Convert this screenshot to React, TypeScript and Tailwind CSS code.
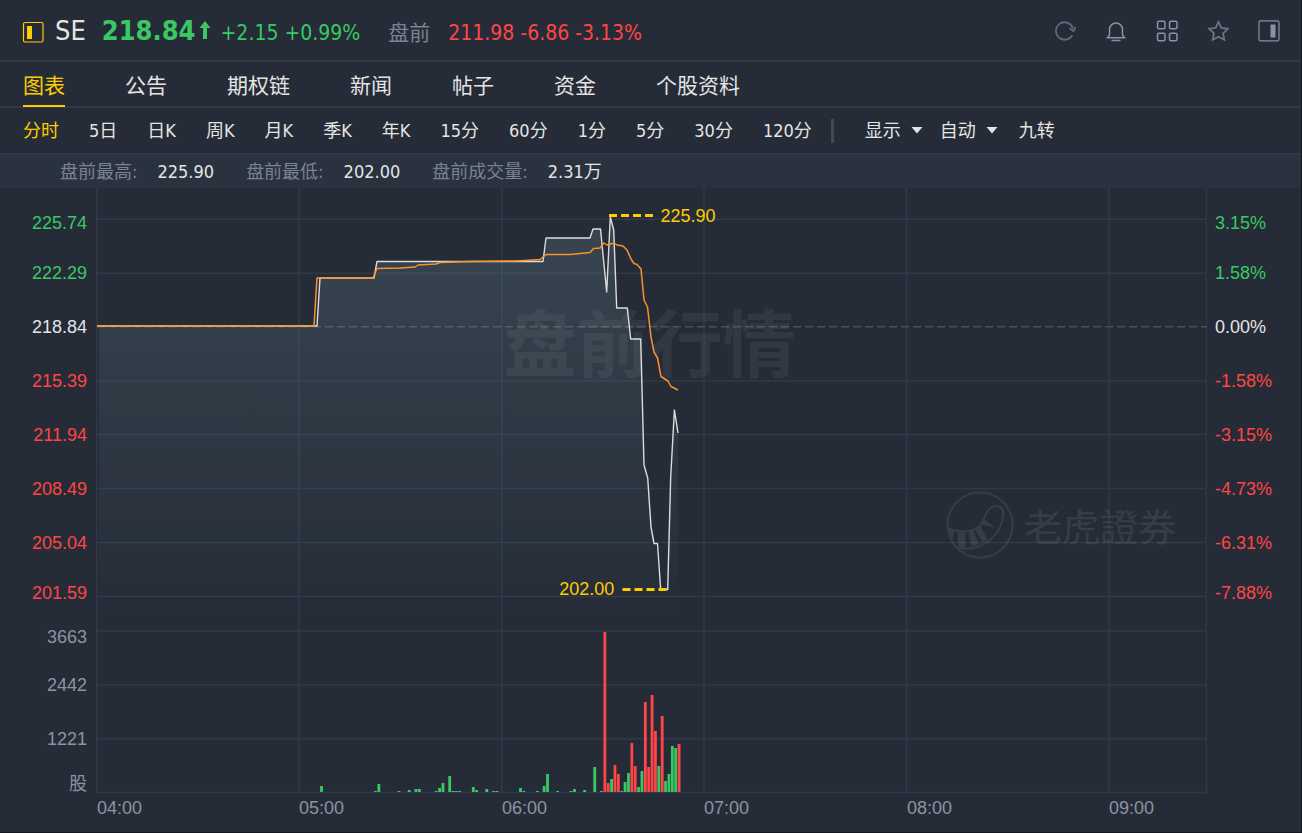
import { useState } from 'react';
import type { ReactNode } from 'react';
import clsx from 'clsx';

const TABS = ['图表', '公告', '期权链', '新闻', '帖子', '资金', '个股资料'];

const PERIODS = [
    '分时',
    '5日',
    '日K',
    '周K',
    '月K',
    '季K',
    '年K',
    '15分',
    '60分',
    '1分',
    '5分',
    '30分',
    '120分',
];

const STATS = [
    { label: '盘前最高:', value: '225.90' },
    { label: '盘前最低:', value: '202.00' },
    { label: '盘前成交量:', value: '2.31万' },
];

const AXIS = [
    { price: '225.74', percent: '3.15%', row: 'h-[46px] text-[#3ac864]' },
    { price: '222.29', percent: '1.58%', row: 'h-[54px] text-[#3ac864]' },
    { price: '218.84', percent: '0.00%', row: 'h-[54px] text-[#e4e4e4]' },
    { price: '215.39', percent: '-1.58%', row: 'h-[54px] text-[#ff4545]' },
    { price: '211.94', percent: '-3.15%', row: 'h-[54px] text-[#ff4545]' },
    { price: '208.49', percent: '-4.73%', row: 'h-[54px] text-[#ff4545]' },
    { price: '205.04', percent: '-6.31%', row: 'h-[54px] text-[#ff4545]' },
    { price: '201.59', percent: '-7.88%', row: 'h-[46px] text-[#ff4545]' },
];

const VOLUME_AXIS = [
    { label: '3663', row: 'h-[42px]' },
    { label: '2442', row: 'h-[54px]' },
    { label: '1221', row: 'h-[54px]' },
    { label: '股', row: 'h-[36px]' },
];

const HOURS = ['04:00', '05:00', '06:00', '07:00', '08:00', '09:00'];

// Plot space is 1111 x 606, one minute is 3.373 units wide
const PLOT_BOTTOM = 604;
const MINUTE = 3.373;

const PRICE_LINE =
    '1,138 221,138 224,90 278,90 281,73.5 447,73.5 450,50 494,50 497,41 504.5,41 510.7,104 514.3,29 517.7,42 520.7,120 531.3,120 534.7,151 544.7,151 548,277 551.7,290 555,339 558,355.5 561.5,355.5 564.7,401.5 571.7,401.5 574.7,289 578.4,222 582,245';

const AVERAGE_LINE =
    '1,138 218,138 221,90 277,90 281,80.5 304,80 319,79 322,77 340,76 344,74.5 374,73.5 420,73 444,71.5 450,66.5 474,66.5 494,64.5 497.5,60.5 504,60 508,55 511,57 518,55 521,57 527,58 531,62 535,71 538,75.5 541,76.5 545,81 548,112 551.5,119 555,149 558,164 561.5,170 565,188.5 572,193 575,198.5 582,202';

// [minute, height, falling]
const VOLUMES: [number, number, boolean?][] = [
    [66, 6],
    [82, 1],
    [83, 8],
    [89, 1],
    [92, 2],
    [94, 3],
    [95, 3],
    [100, 1],
    [101, 4],
    [102, 9],
    [104, 16],
    [105, 1],
    [106, 1],
    [107, 1],
    [111, 5],
    [112, 2],
    [115, 3],
    [117, 1],
    [118, 1],
    [125, 4],
    [126, 1],
    [130, 1],
    [132, 6],
    [133, 18],
    [136, 1],
    [140, 1],
    [141, 3],
    [144, 2],
    [147, 25],
    [149, 1],
    [150, 160, true],
    [151, 9, true],
    [152, 13],
    [153, 27, true],
    [154, 18, true],
    [155, 1],
    [156, 10],
    [157, 19],
    [158, 49, true],
    [159, 26, true],
    [160, 5],
    [161, 21],
    [162, 90, true],
    [163, 25, true],
    [164, 97, true],
    [165, 61, true],
    [166, 26],
    [167, 76, true],
    [168, 11],
    [169, 18],
    [170, 46],
    [171, 44],
    [172, 48, true],
];

const IconButton = ({
    label,
    className,
    children,
}: {
    label: string;
    className?: string;
    children: ReactNode;
}) => (
    <button
        type="button"
        aria-label={label}
        className={clsx('hover:text-gray-200', className)}
    >
        <svg
            width="22"
            height="22"
            viewBox="0 0 22 22"
            fill="none"
            stroke="currentColor"
            strokeWidth="1.5"
        >
            {children}
        </svg>
    </button>
);

const Header = () => (
    <header className="flex h-[62px] items-center border-b-2 border-[#2e3a49] pl-[22px] pr-[21px]">
        <svg width="22" height="22" viewBox="0 0 22 22" className="mt-1">
            <rect
                x="1.5"
                y="1.5"
                width="19.5"
                height="19.5"
                rx="1.5"
                fill="none"
                stroke="#fc0"
                strokeWidth="1.2"
            />
            <rect x="5" y="5" width="5" height="13" fill="#fc0" />
        </svg>
        <h1 className="ml-[11px] text-[27px] leading-none text-[#e4e4e4]">SE</h1>
        <div className="ml-4 flex items-center text-[#3ac864]">
            <span className="text-[27px] leading-none font-bold">218.84</span>
            <svg width="12" height="20" viewBox="0 0 12 20" className="ml-[3px]">
                <path d="M6 1 11.5 8H8v11H4V8H.5Z" fill="currentColor" />
            </svg>
            <span className="mt-1.5 ml-[10px] text-[21px] leading-none">
                +2.15 +0.99%
            </span>
        </div>
        <span className="mt-1.5 ml-7 text-[21px] leading-none text-[#7a8294]">
            盘前
        </span>
        <span className="mt-1.5 ml-[18px] text-[21px] leading-none text-[#ff4545]">
            211.98 -6.86 -3.13%
        </span>
        <div className="ml-auto flex items-center gap-[29px] pt-0.5 text-[#8992a5]">
            <IconButton label="刷新" className="text-[#5f6979]">
                <path
                    d="M18.3 15.2A8.7 8.7 0 1 1 19 8.5M15.5 8.2l4 3 2.2-4.2"
                    strokeWidth="1.8"
                />
            </IconButton>
            <IconButton label="提醒">
                <path d="M4.5 15V9.5a6.5 6.5 0 0 1 13 0V15l2 2.7h-17Z" />
                <path d="M6.5 20.5h9" />
            </IconButton>
            <IconButton label="分组">
                <rect x="1.5" y="1.2" width="7.5" height="7.5" rx="1.5" />
                <rect x="13.5" y="1.2" width="7.5" height="7.5" rx="1.5" />
                <rect x="1.5" y="13.2" width="7.5" height="7.5" rx="1.5" />
                <rect x="13.5" y="13.2" width="7.5" height="7.5" rx="1.5" />
            </IconButton>
            <IconButton label="自选" className="text-[#6a7485]">
                <path
                    d="m11.5 1.8 2.8 6 6.6.9-4.8 4.6 1.2 6.6-5.8-3.2-5.8 3.2 1.2-6.6L2.1 8.7l6.6-.9Z"
                    strokeWidth="1.8"
                />
            </IconButton>
            <IconButton label="侧栏">
                <rect x="1" y=".8" width="20" height="20" rx="1.5" strokeWidth="1.2" />
                <rect x="12.5" y="4.5" width="5" height="13" fill="currentColor" stroke="none" />
            </IconButton>
        </div>
    </header>
);

const Dropdown = ({ label, options }: { label: string; options: string[] }) => (
    <div className="relative flex items-center">
        <select
            aria-label={label}
            className="w-[58px] cursor-pointer appearance-none bg-transparent outline-none"
        >
            {options.map((option) => (
                <option key={option} className="bg-[#252c37]">
                    {option}
                </option>
            ))}
        </select>
        <svg
            width="12"
            height="7"
            viewBox="0 0 12 7"
            className="pointer-events-none absolute right-0"
        >
            <path d="M.5 0h11L6 6.5Z" fill="currentColor" />
        </svg>
    </div>
);

const ValueAxis = ({ side }: { side: 'left' | 'right' }) => (
    <div
        className={clsx(
            'flex shrink-0 flex-col pt-3',
            side === 'left' ? 'w-24 items-end pr-[9px]' : 'w-[94px] pl-2'
        )}
    >
        {AXIS.map((tick) => (
            <div key={tick.price} className={clsx('flex items-center', tick.row)}>
                {side === 'left' ? tick.price : tick.percent}
            </div>
        ))}
        {side === 'left' &&
            VOLUME_AXIS.map((tick) => (
                <div
                    key={tick.label}
                    className={clsx('flex items-center text-[#8d93a1]', tick.row)}
                >
                    {tick.label}
                </div>
            ))}
    </div>
);

const Plot = () => (
    <div className="relative h-[606px]">
        <svg
            viewBox="0 0 1111 606"
            preserveAspectRatio="none"
            className="block h-full w-full"
        >
            <defs>
                <linearGradient
                    id="area"
                    gradientUnits="userSpaceOnUse"
                    x1="0"
                    y1="29"
                    x2="0"
                    y2="430"
                >
                    <stop offset="0" stopColor="#8fb8c8" stopOpacity=".18" />
                    <stop offset="1" stopColor="#8fb8c8" stopOpacity="0" />
                </linearGradient>
            </defs>
            <g stroke="#2e3a49" strokeWidth="1.5">
                {[31.3, 85.3, 193, 246.5, 300.5, 354.5, 408.5, 443, 497, 550.7, 604.5].map(
                    (y) => (
                        <line key={y} x1="1" x2="1111" y1={y} y2={y} />
                    )
                )}
                {[0.7, 203, 405.7, 608, 810.5, 1013, 1110.5].map((x) => (
                    <line key={x} x1={x} x2={x} y1="0" y2="604.5" />
                ))}
            </g>
            <line
                x1="1"
                x2="1111"
                y1="138.7"
                y2="138.7"
                stroke="#4b4d5b"
                strokeWidth="1.5"
                strokeDasharray="8 4"
            />
            <polygon points={`3,430 3,138 ${PRICE_LINE} 582,430`} fill="url(#area)" />
            <polyline
                points={PRICE_LINE}
                fill="none"
                stroke="#dcdcdc"
                strokeWidth="1.4"
                strokeLinejoin="round"
            />
            <polyline
                points={AVERAGE_LINE}
                fill="none"
                stroke="#f9922c"
                strokeWidth="1.5"
                strokeLinejoin="round"
            />
            <g stroke="#fc0" strokeWidth="3" strokeDasharray="8 4">
                <line x1="513" x2="557" y1="27.5" y2="27.5" />
                <line x1="526.5" x2="570.5" y1="401.5" y2="401.5" />
            </g>
            {VOLUMES.map(([minute, height, falling]) => (
                <rect
                    key={minute}
                    x={minute * MINUTE + 1.5}
                    y={PLOT_BOTTOM - height}
                    width="2.8"
                    height={height}
                    fill={falling ? '#ff4545' : '#3ac864'}
                />
            ))}
        </svg>

        {/* price callouts */}
        <span className="absolute top-[18px] left-[50.8%] leading-5 text-[#fc0]">
            225.90
        </span>
        <span className="absolute top-[391px] left-[41.7%] leading-5 text-[#fc0]">
            202.00
        </span>

        {/* watermarks */}
        <div className="pointer-events-none absolute top-[115px] left-[36.7%] font-[Noto_Sans_CJK_SC,sans-serif] text-[73px] leading-[73px] font-bold text-white/6">
            盘前行情
        </div>
        <div className="pointer-events-none absolute top-[303px] left-[76.5%] flex items-center gap-[10px] text-white opacity-8">
            <svg
                width="68"
                height="68"
                viewBox="0 0 68 68"
                fill="none"
                stroke="currentColor"
                strokeWidth="2"
            >
                <circle cx="34" cy="34" r="32.5" />
                <path d="M1.5 36C6 39 10 40 15 40 25 41 33 37 37 30 40 25 41 15 50 15c6 0 8 5 7 10-2 15-12 27-26 31-6 2-12 2-18 1" />
                <path
                    d="m1.5 36 6 3-1 9ZM12 41h7v15l-6 1ZM23 40l4-1 5 14-6 2ZM29 38l4-4 8 14-4 3ZM37 28l11 8-12-3Z"
                    fill="currentColor"
                    strokeWidth="1"
                />
            </svg>
            <span className="font-[Noto_Sans_CJK_TC,sans-serif] text-[38px] leading-none">
                老虎證券
            </span>
        </div>
    </div>
);

export default function App() {
    const [tab, setTab] = useState('图表');
    const [period, setPeriod] = useState('分时');

    return (
        <div className="min-h-screen border-r border-b border-[#12161d] bg-[#252c37] font-[DejaVu_Sans_Condensed,Noto_Sans,Noto_Sans_CJK_SC,sans-serif] text-lg text-[#e4e4e4]">
            <Header />

            <nav className="flex h-[46px] gap-[60px] border-b-2 border-[#2e3a49] pl-[23px] text-[21px]">
                {TABS.map((name) => (
                    <button
                        key={name}
                        type="button"
                        onClick={() => setTab(name)}
                        className={clsx(
                            '-mb-px border-b-2 pt-1.5 leading-none whitespace-nowrap',
                            tab === name
                                ? 'border-[#fc0] text-[#fc0]'
                                : 'border-transparent'
                        )}
                    >
                        {name}
                    </button>
                ))}
            </nav>

            <div className="flex h-[47px] items-center border-b-2 border-[#2e3a49] pl-[23px]">
                <div className="flex gap-[30px]">
                    {PERIODS.map((name) => (
                        <button
                            key={name}
                            type="button"
                            onClick={() => setPeriod(name)}
                            className={clsx(
                                'whitespace-nowrap',
                                period === name && 'text-[#fc0]'
                            )}
                        >
                            {name}
                        </button>
                    ))}
                </div>
                <div className="mr-[31px] ml-[19px] h-6 w-[3px] bg-[#434954]" />
                <div className="flex items-center gap-[17px]">
                    <Dropdown label="显示" options={['显示', '均价线', '成交量']} />
                    <Dropdown label="坐标" options={['自动', '普通', '对数']} />
                </div>
                <button type="button" className="ml-[21px] whitespace-nowrap">
                    九转
                </button>
            </div>

            <dl className="flex h-[33px] items-center gap-8 bg-[#29323e] pl-[60px]">
                {STATS.map((stat) => (
                    <div key={stat.label} className="flex gap-5">
                        <dt className="text-[#7a8294]">{stat.label}</dt>
                        <dd>{stat.value}</dd>
                    </div>
                ))}
            </dl>

            <main className="flex font-[Liberation_Sans,Noto_Sans_CJK_SC,sans-serif]">
                <ValueAxis side="left" />
                <div className="min-w-0 flex-1">
                    <Plot />
                    <div className="grid h-7 grid-cols-[202fr_203fr_202fr_203fr_202fr_98fr] items-center pl-px text-[#8d93a1]">
                        {HOURS.map((hour) => (
                            <span key={hour}>{hour}</span>
                        ))}
                    </div>
                </div>
                <ValueAxis side="right" />
            </main>
        </div>
    );
}
